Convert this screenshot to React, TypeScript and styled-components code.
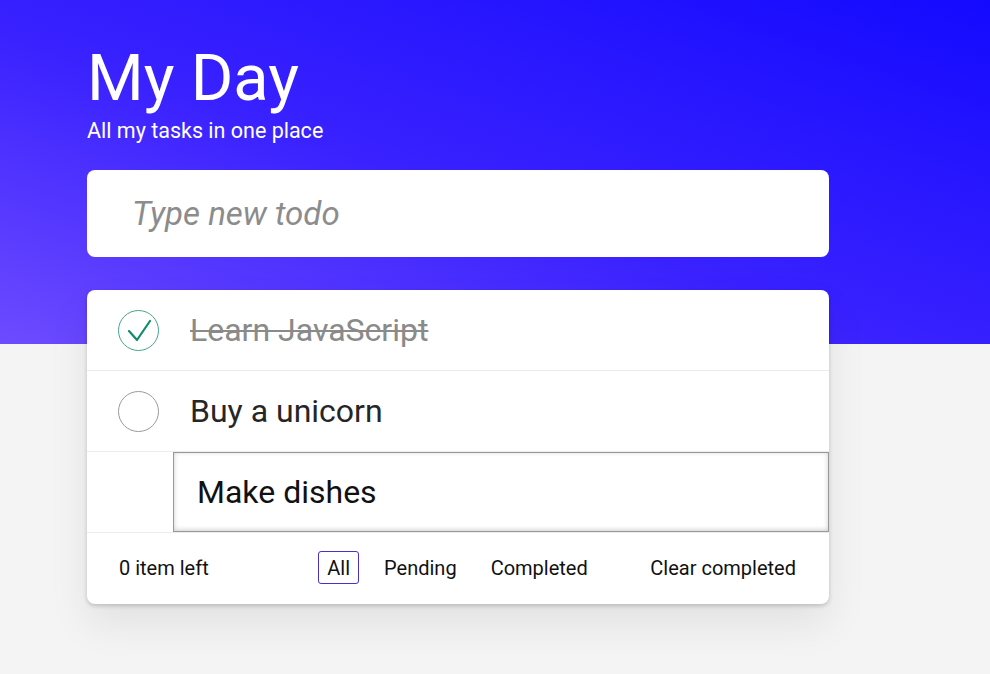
import React, { useState } from "react";
import styled, { createGlobalStyle } from "styled-components";

const GlobalStyle = createGlobalStyle`
  html, body {
    margin: 0;
    padding: 0;
  }

  body {
    background-color: #f4f4f4;
    font-family: Roboto, "Liberation Sans", Arial, sans-serif;
  }
`;

const Page = styled.div`
  min-height: 674px;

  background:
    linear-gradient(to top right, #6d4bff 0%, #3a22ff 45%, #140aff 100%) top left / 100% 344px no-repeat,
    #f4f4f4;

  padding: 40px 0 60px 87px;
  box-sizing: border-box;
`;

const Container = styled.div`
  width: 742px;
`;

const Title = styled.h1`
  margin: 0;

  font-size: 65px;
  font-weight: 400;
  line-height: normal;
  color: #ffffff;
`;

const Subtitle = styled.p`
  margin: 2px 0 0 0;

  font-size: 21.5px;
  line-height: normal;
  color: #ffffff;
`;

const NewTodoCard = styled.div`
  margin-top: 27px;
  height: 87px;

  background-color: #ffffff;
  border-radius: 8px;

  display: flex;
  align-items: center;
`;

const NewTodoInput = styled.input`
  width: 100%;
  height: 100%;

  padding: 0 45px;
  box-sizing: border-box;

  border: none;
  outline: none;
  background: transparent;

  font-family: Roboto, "Liberation Sans", Arial, sans-serif;
  font-size: 33px;
  color: #222;

  &::placeholder {
    font-style: italic;
    color: #8c8c8c;
  }
`;

const ListCard = styled.section`
  margin-top: 33px;

  background-color: #ffffff;
  border-radius: 8px;
  overflow: hidden;

  box-shadow: 0 2px 4px rgba(0, 0, 0, 0.18), 0 20px 40px rgba(0, 0, 0, 0.08);
`;

const List = styled.ul`
  margin: 0;
  padding: 0;
  list-style: none;
`;

const Row = styled.li`
  height: 80px;

  border-bottom: 1px solid #ececec;

  display: flex;
  align-items: center;
`;

const Toggle = styled.button<{ $done: boolean }>`
  width: 41px;
  height: 41px;

  margin-left: 31px;
  margin-right: 31px;
  padding: 0;

  border-radius: 50%;
  border: 1px solid ${(p) => (p.$done ? "#44a48d" : "#9a9a9a")};
  background: #ffffff;

  display: flex;
  align-items: center;
  justify-content: center;

  cursor: pointer;
`;

const Label = styled.span<{ $done: boolean }>`
  font-size: 32px;
  color: ${(p) => (p.$done ? "#8a8a8a" : "#262626")};
  text-decoration: ${(p) => (p.$done ? "line-through" : "none")};
  text-decoration-thickness: 2px;
`;

const EditInput = styled.input`
  margin-left: 86px;
  width: 656px;
  height: 80px;

  padding: 0 23px;
  box-sizing: border-box;

  border: 1px solid #999;
  outline: none;
  box-shadow: inset 0 -1px 5px 0 rgba(0, 0, 0, 0.2);

  font-family: Roboto, "Liberation Sans", Arial, sans-serif;
  font-size: 32px;
  color: #111;
`;

const Footer = styled.footer`
  height: 71px;

  padding: 0 33px 2px 32px;
  box-sizing: border-box;

  display: grid;
  grid-template-columns: 1fr auto 1fr;
  align-items: center;

  font-size: 20px;
  color: #111;
`;

const Count = styled.span``;

const Filters = styled.div`
  display: flex;
  align-items: center;
  gap: 16px;
`;

const FilterButton = styled.button<{ $active: boolean }>`
  height: 33px;

  padding: 0 8px;

  border: 1px solid ${(p) => (p.$active ? "#4a2fc9" : "transparent")};
  border-radius: 3px;
  background: transparent;

  font-family: Roboto, "Liberation Sans", Arial, sans-serif;
  font-size: 20px;
  color: #111;

  cursor: pointer;
`;

const ClearButton = styled.button`
  justify-self: end;

  padding: 0;

  border: none;
  background: transparent;

  font-family: Roboto, "Liberation Sans", Arial, sans-serif;
  font-size: 20px;
  color: #111;

  cursor: pointer;
`;

const Check = () => (
  <svg width="30" height="30" viewBox="0 0 30 30" fill="none">
    <path d="M5 16 L13 25 L26 6" stroke="#138a6d" strokeWidth="2.2" strokeLinecap="round" strokeLinejoin="round" />
  </svg>
);

interface Todo {
  id: number;
  text: string;
  done: boolean;
}

export default function App() {
  const [todos] = useState<Todo[]>([
    { id: 1, text: "Learn JavaScript", done: true },
    { id: 2, text: "Buy a unicorn", done: false },
  ]);
  const [editText, setEditText] = useState("Make dishes");
  const [filter, setFilter] = useState("All");

  return (
    <>
      <GlobalStyle />
      <Page>
        <Container>
          <Title>My Day</Title>
          <Subtitle>All my tasks in one place</Subtitle>

          <NewTodoCard>
            <NewTodoInput placeholder="Type new todo" />
          </NewTodoCard>

          <ListCard>
            <List>
              {todos.map((todo) => (
                <Row key={todo.id}>
                  <Toggle $done={todo.done}>{todo.done && <Check />}</Toggle>
                  <Label $done={todo.done}>{todo.text}</Label>
                </Row>
              ))}
              <Row>
                <EditInput value={editText} onChange={(e) => setEditText(e.target.value)} />
              </Row>
            </List>

            <Footer>
              <Count>0 item left</Count>
              <Filters>
                {["All", "Pending", "Completed"].map((f) => (
                  <FilterButton key={f} $active={filter === f} onClick={() => setFilter(f)}>
                    {f}
                  </FilterButton>
                ))}
              </Filters>
              <ClearButton>Clear completed</ClearButton>
            </Footer>
          </ListCard>
        </Container>
      </Page>
    </>
  );
}
